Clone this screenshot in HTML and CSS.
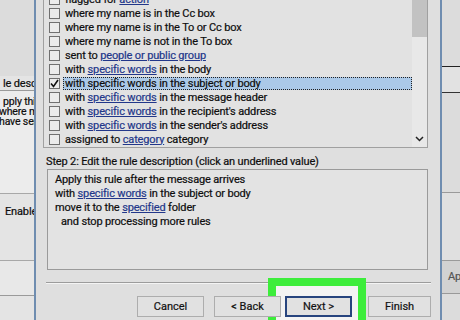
FILE: index.html
```html
<!DOCTYPE html>
<html lang="en">
<head>
    <meta charset="UTF-8">
    <meta name="viewport" content="width=device-width, initial-scale=1.0">
    <title>Rules Wizard</title>
    <link rel="stylesheet" href="styles.css">
</head>
<body>
    <div class="screen">
        <!-- window behind the dialog, left side -->
        <div class="behind-left">
            <div class="bl-top"></div>
            <div class="bl-label">le description (click an underlined value)</div>
            <div class="bl-box">
                <div>pply this rule after the message arrives</div>
                <div class="cut">where my name is in the To box</div>
                <div class="cut">have sent</div>
            </div>
            <div class="bl-enable">Enable this rule</div>
            <div class="bl-band"></div>
        </div>

        <div class="dialog">
            <div class="cond-list">
                <div class="rows">
                    <div class="row"><span class="check"></span><span class="label">flagged for <a>action</a></span></div>
                    <div class="row"><span class="check"></span><span class="label">where my name is in the Cc box</span></div>
                    <div class="row"><span class="check"></span><span class="label">where my name is in the To or Cc box</span></div>
                    <div class="row"><span class="check"></span><span class="label">where my name is not in the To box</span></div>
                    <div class="row"><span class="check"></span><span class="label">sent to <a>people or public group</a></span></div>
                    <div class="row"><span class="check"></span><span class="label">with <a>specific words</a> in the body</span></div>
                    <div class="row selected">
                        <span class="check"><svg width="9" height="9" viewBox="0 0 9 9"><path d="M1 4.5 L3.5 7.5 L8 1" fill="none" stroke="#111" stroke-width="1.6"/></svg></span>
                        <span class="label">with specific words in the subject or body</span>
                    </div>
                    <div class="row"><span class="check"></span><span class="label">with <a>specific words</a> in the message header</span></div>
                    <div class="row"><span class="check"></span><span class="label">with <a>specific words</a> in the recipient's address</span></div>
                    <div class="row"><span class="check"></span><span class="label">with <a>specific words</a> in the sender's address</span></div>
                    <div class="row"><span class="check"></span><span class="label">assigned to <a>category</a> category</span></div>
                </div>
                <div class="scrollbar">
                    <div class="thumb"></div>
                    <div class="track"></div>
                    <div class="arrow">
                        <svg width="9" height="6" viewBox="0 0 9 6"><path d="M1 1 L4.5 4.5 L8 1" fill="none" stroke="#222" stroke-width="1.5"/></svg>
                    </div>
                </div>
            </div>

            <div class="step-label">Step 2: Edit the rule description (click an underlined value)</div>
            <div class="desc">
                <div>Apply this rule after the message arrives</div>
                <div>with <a>specific words</a> in the subject or body</div>
                <div>move it to the <a>specified</a> folder</div>
                <div class="indent">and stop processing more rules</div>
            </div>

            <div class="separator"></div>

            <div class="buttons">
                <button class="btn">Cancel</button>
                <button class="btn back">&lt; Back</button>
                <button class="btn next">Next &gt;</button>
                <button class="btn finish">Finish</button>
                <div class="highlight"></div>
            </div>
        </div>

        <!-- window behind the dialog, right side -->
        <div class="behind-right">
            <div class="br-a"></div>
            <div class="br-b"></div>
            <div class="br-c"></div>
            <div class="br-d"></div>
            <div class="br-btn">Apply</div>
        </div>
    </div>
</body>
</html>
```

FILE: styles.css
```css
* { box-sizing: border-box; }
body { margin: 0; font-family: Roboto, "Liberation Sans", sans-serif; font-size: 11px; letter-spacing: -0.15px; color: #0e0e0e; -webkit-text-stroke: 0.2px; background: #dedede; }
.screen { display: flex; width: 460px; height: 320px; overflow: hidden; }
a { color: #22378a; text-decoration: underline; }

/* window behind, left */
.behind-left { width: 34px; flex: none; background: #e4e4e4; white-space: nowrap; overflow: hidden; }
.bl-top { height: 76px; background: #dcdcdc; }
.bl-label { height: 15px; line-height: 15px; padding-left: 3px; border-bottom: 1px solid #9a9a9a; }
.bl-box { height: 103px; padding: 6px 0 0 3px; background: #ececec; border-bottom: 1px solid #a8a8a8; font-size: 10.5px; line-height: 10px; }
.bl-box div { height: 10px; }
.bl-box .cut { text-indent: -4px; }
.bl-enable { height: 67px; padding: 11px 0 0 5px; border-bottom: 1px solid #a8a8a8; line-height: 14px; }
.bl-band { height: 35px; background: #e8e8e8; border-bottom: 1px solid #9a9a9a; }

/* the wizard dialog */
.dialog { position: relative; width: 408px; flex: none; border-left: 2px solid #6f8db0; border-right: 2px solid #6f8db0; background: #dfdfdf; padding-left: 7px; }
.cond-list { display: flex; width: 385px; margin-top: -8px; height: 156px; border: 1px solid #a0a0a0; border-top: none; background: #e2e2e2; }
.rows { flex: 1; padding-left: 5px; }
.row { display: flex; align-items: center; height: 14px; white-space: nowrap; }
.check { display: flex; align-items: center; justify-content: center; width: 11px; height: 11px; border: 1px solid #707070; background: #ebebeb; margin-right: 3px; flex: none; }
.label { flex: 1; height: 13px; line-height: 13px; padding-left: 2px; }
.selected .label { background: #abc9e8; outline: 1px dotted #222; outline-offset: -1px; }
.scrollbar { width: 15px; display: flex; flex-direction: column; background: #e8e8e8; }
.thumb { height: 45px; background: #c2c2c2; }
.track { flex: 1; }
.arrow { height: 17px; display: flex; align-items: center; justify-content: center; }

.step-label { margin-top: 7px; height: 14px; line-height: 14px; padding-left: 3px; }
.desc { margin-left: 4px; height: 101px; width: 381px; border: 1px solid #9a9a9a; background: #e3e3e3; padding: 3px 0 0 7px; line-height: 14px; }
.desc .indent { padding-left: 6px; }

.separator { margin-top: 12px; width: 385px; margin-left: 3px; border-top: 1px solid #9c9c9c; border-bottom: 1px solid #f4f4f4; }

.buttons { position: relative; display: flex; margin-top: 12px; padding-left: 94px; }
.btn { position: relative; z-index: 1; width: 67px; height: 21px; font: inherit; color: #111; background: #e1e1e1; border: 1px solid #adadad; padding: 0; }
.back { margin-left: 10px; }
.next { margin-left: 4px; border: 2px solid #27447e; }
.finish { margin-left: 16px; width: 63px; }
.highlight { position: absolute; left: 225px; top: -18px; width: 98px; height: 60px; border: 8px solid #3ded3b; background: #f3f3f3; }

/* window behind, right */
.behind-right { flex: 1; background: #dcdcdc; }
.br-a { height: 67px; border-bottom: 1px solid #222; }
.br-b { height: 26px; border-bottom: 1px solid #333; background: #e2e2e2; }
.br-c { height: 100px; border-bottom: 1px solid #9a9a9a; }
.br-d { height: 68px; border-bottom: 1px solid #9a9a9a; background: #e0e0e0; }
.br-btn { height: 33px; line-height: 32px; padding-left: 6px; color: #555; background: #d2d2d2; border-bottom: 1px solid #999; overflow: hidden; white-space: nowrap; }
```
